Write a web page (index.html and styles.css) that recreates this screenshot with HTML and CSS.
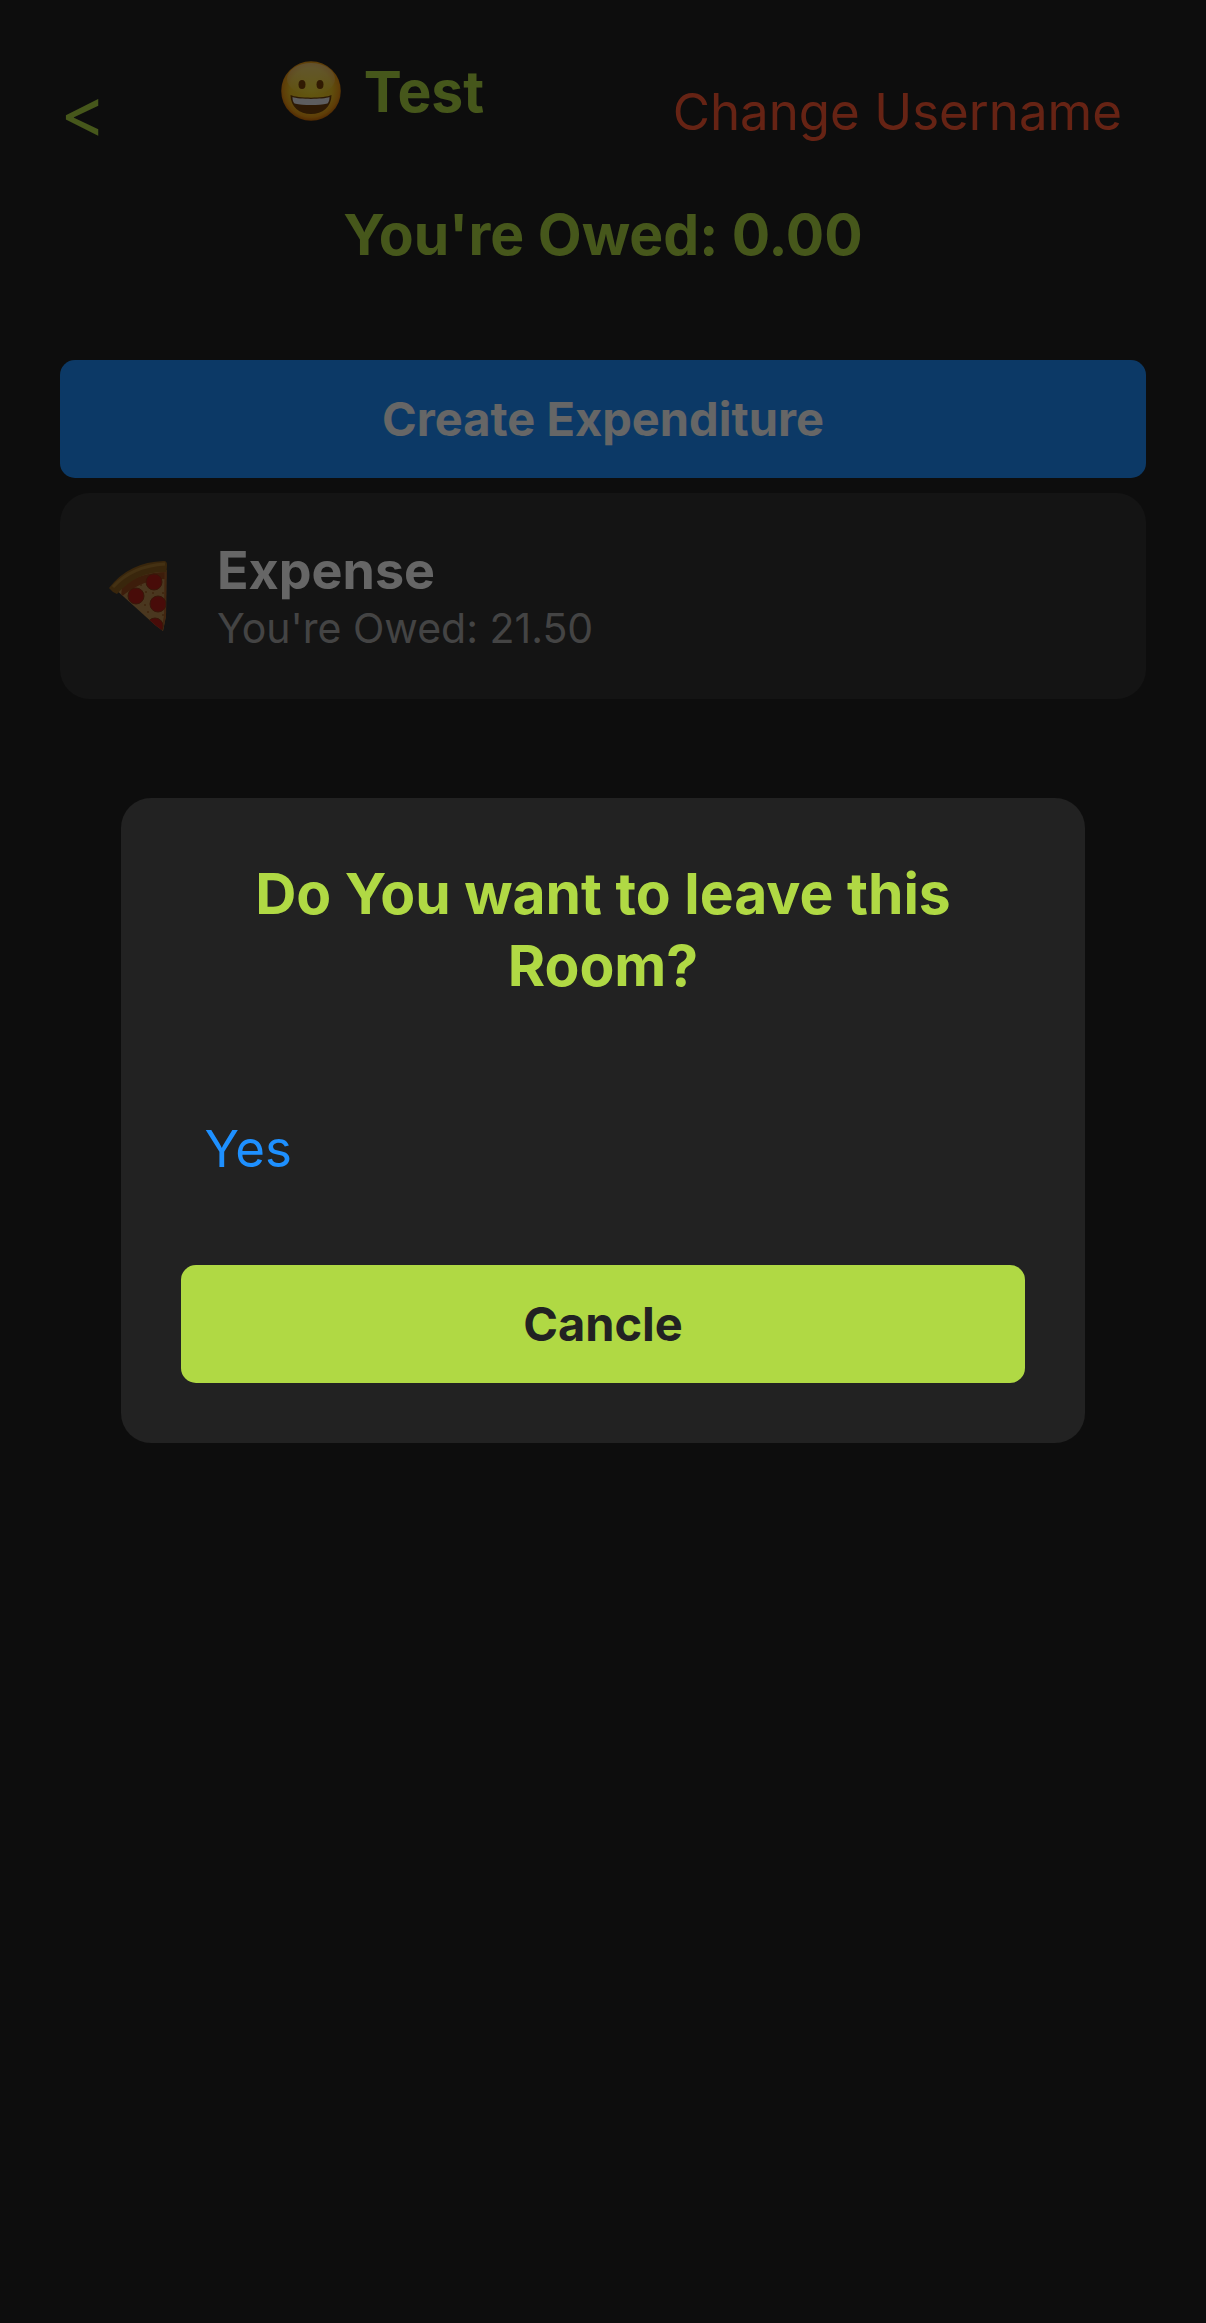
FILE: index.html
```html
<!DOCTYPE html>
<html lang="en">
<head>
<meta charset="utf-8">
<meta name="viewport" content="width=device-width, initial-scale=1">
<title>Test</title>
<link rel="stylesheet" href="styles.css">
</head>
<body>
<main class="page">
  <header class="header">
    <a class="back" href="#" aria-label="Back">&lt;</a>
    <h1 class="heading room">
      <svg class="face" viewBox="0 0 60 60" role="img" aria-label="Grinning face">
        <defs>
          <radialGradient id="rim" cx="30" cy="28" r="32" gradientUnits="userSpaceOnUse">
            <stop offset="0" stop-color="#f5dc2c"/>
            <stop offset=".65" stop-color="#f0c422"/>
            <stop offset=".88" stop-color="#eb9814"/>
            <stop offset="1" stop-color="#c96605"/>
          </radialGradient>
          <linearGradient id="shine" x1="0" y1="0" x2="0" y2="1">
            <stop offset="0" stop-color="#fff" stop-opacity=".4"/>
            <stop offset="1" stop-color="#fff" stop-opacity="0"/>
          </linearGradient>
        </defs>
        <circle cx="30" cy="30" r="29.8" fill="url(#rim)"/>
        <ellipse cx="30" cy="18" rx="24" ry="16" fill="url(#shine)"/>
        <ellipse cx="21" cy="23.500" rx="3.500" ry="4.500" fill="#7a4207"/>
        <ellipse cx="39" cy="23.500" rx="3.500" ry="4.500" fill="#7a4207"/>
        <path d="M9.500 34C16 37.500 44 37.500 50.500 34C50.500 46 41.500 53 30 53S9.500 46 9.500 34Z" fill="#70400a"/>
        <path d="M11.500 36C18 38.500 42 38.500 48.500 36C48.500 39 48 41 46.500 42.500C37 44.500 23 44.500 13.500 42.500C12 41 11.500 39 11.500 36Z" fill="#e9e9ee"/>
      </svg>
      Test
    </h1>
    <button class="text-button danger" type="button">Change Username</button>
  </header>
  <h2 class="heading balance">You're Owed: 0.00</h2>
  <button class="button primary" type="button">Create Expenditure</button>
  <article class="card">
    <svg class="pizza" viewBox="0 0 60 70" role="img" aria-label="Pizza">
      <defs>
        <clipPath id="slice"><path d="M5 27Q25 5 57.500 9L57 55L54 70L46 64Z"/></clipPath>
      </defs>
      <g clip-path="url(#slice)">
        <path d="M0 0H60V70H0Z" fill="#b98a4e"/>
        <path d="M13 25Q31 11 60 11L60 18Q35 17 12 36Z" fill="#9a4a1c"/>
        <path d="M57.500 8L57 55L54 70" fill="none" stroke="#a8602a" stroke-width="4"/>
        <g fill="#9c5a26">
          <circle cx="32" cy="24" r="1"/><circle cx="37" cy="31" r="1"/><circle cx="44" cy="32" r="1"/><circle cx="54" cy="32" r="1"/>
          <circle cx="36" cy="44" r="1"/><circle cx="39" cy="51" r="1"/><circle cx="54" cy="54" r="1"/><circle cx="22" cy="44" r="1"/>
        </g>
        <g fill="#b41f18" stroke="#8c3a18" stroke-width="1">
          <circle cx="45" cy="21" r="8"/>
          <circle cx="27" cy="35" r="8"/>
          <circle cx="49" cy="43" r="8"/>
          <circle cx="46" cy="65" r="8"/>
        </g>
      </g>
      <path d="M0 27Q20 1 55 0Q58 0 58 4L57.500 11Q28 10 8 33Q3 31 0 27Z" fill="#90601f"/>
      <path d="M4 26Q23 5 56 3" fill="none" stroke="#ab7a31" stroke-width="3"/>
    </svg>
    <div>
      <h3 class="card-title">Expense</h3>
      <p class="card-note">You're Owed: 21.50</p>
    </div>
  </article>
</main>
<div class="overlay">
  <section class="modal" role="dialog" aria-modal="true" aria-labelledby="question">
    <h2 class="heading" id="question">Do You want to leave this Room?</h2>
    <button class="text-button confirm" type="button">Yes</button>
    <button class="button cancel" type="button">Cancle</button>
  </section>
</div>
</body>
</html>
```
FILE: styles.css
```css
* {
  box-sizing: border-box;
}

body {
  margin: 0;
  background: #222;
  color: #fff;
  font-family: Inter, "Liberation Sans", sans-serif;
}

h1, h2, h3, p {
  margin: 0;
}

button {
  border: 0;
  font-family: inherit;
  cursor: pointer;
}

.page {
  min-height: 100vh;
  padding: 56px 60px;
}

.header {
  display: flex;
  justify-content: space-between;
  align-items: flex-start;
}

.heading {
  color: #b0d944;
  font-size: 57px;
  font-weight: 700;
  line-height: 72px;
  text-align: center;
}

.back {
  align-self: center;
  padding-right: 10px;
  color: #b0d944;
  font-size: 70px;
  line-height: 72px;
  text-decoration: none;
}

.room {
  display: flex;
  gap: 23px;
}

.face {
  width: 60px;
  height: 60px;
  margin-top: 5px;
}

.text-button {
  padding: 24px;
  background: none;
  font-size: 51px;
  line-height: 64px;
}

.danger {
  color: #ff5733;
}

.balance {
  margin: 31px 0 89px;
}

.button {
  display: block;
  width: 100%;
  padding: 30px;
  border-radius: 15px;
  font-size: 47px;
  font-weight: 700;
  line-height: 58px;
}

.primary {
  background: #1e90ff;
  color: #fff;
}

.card {
  display: flex;
  align-items: center;
  gap: 48px;
  margin-top: 15px;
  padding: 45px 49px;
  border-radius: 30px;
  background: #333;
}

.pizza {
  width: 60px;
  height: 70px;
}

.card-title {
  font-size: 52px;
  font-weight: 700;
  line-height: 65px;
}

.card-note {
  color: #aaa;
  font-size: 41px;
  line-height: 51px;
}

.overlay {
  position: fixed;
  inset: 0;
  display: flex;
  align-items: center;
  justify-content: center;
  padding-bottom: 83px;
  background: rgba(0, 0, 0, .6);
}

.modal {
  width: 80%;
  padding: 60px;
  border-radius: 30px;
  background: #222;
}

.confirm {
  display: block;
  margin: 91px 0 60px;
  color: #1e90ff;
}

.cancel {
  background: #b0d944;
  color: #222;
}
```
